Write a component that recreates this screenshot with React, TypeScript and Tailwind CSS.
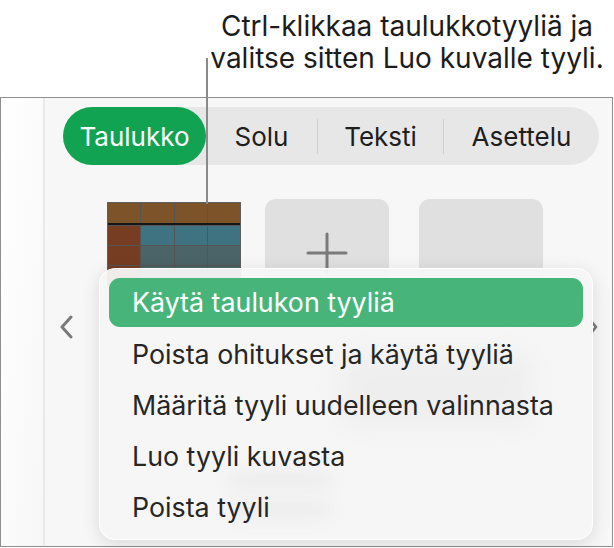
import React from 'react';

const font = { fontFamily: 'Inter, "Noto Sans", sans-serif' };

const menuItems = [
  'Käytä taulukon tyyliä',
  'Poista ohitukset ja käytä tyyliä',
  'Määritä tyyli uudelleen valinnasta',
  'Luo tyyli kuvasta',
  'Poista tyyli',
];

function TableStyleThumb() {
  // 4 columns, header row + body rows
  const body = ['bg-[#3f7381]', 'bg-[#4b6467]', 'bg-[#4b6467]'];
  return (
    <div className="w-[134px] border border-[#5e5e5e] bg-[#555]">
      <div className="grid grid-cols-4 gap-px">
        {[0, 1, 2, 3].map((c) => (
          <div key={c} className="h-[20px] bg-[#7d5429]" />
        ))}
      </div>
      <div className="h-[2px] bg-[#151515]" />
      {body.map((cls, r) => (
        <div key={r} className="grid grid-cols-4 gap-px mt-px first:mt-0">
          <div className="h-[19px] bg-[#773d22]" />
          <div className={`h-[19px] ${cls}`} />
          <div className={`h-[19px] ${cls}`} />
          <div className={`h-[19px] ${cls}`} />
        </div>
      ))}
    </div>
  );
}

export default function App() {
  return (
    <div className="relative w-[614px] h-[548px] bg-white overflow-hidden" style={font}>
      {/* callout */}
      <div className="h-[97px] pl-[202px] pr-[2px] pt-[10px] text-center text-[28px] leading-[32px] text-[#1c1c1c]">
        <div>Ctrl-klikkaa taulukkotyyliä ja</div>
        <div>valitse sitten Luo kuvalle tyyli.</div>
      </div>

      {/* inspector panel */}
      <div className="flex h-[450px] w-[613px] border border-[#8f8f8f]">
        <div className="w-[42px] bg-gradient-to-br from-white to-[#f7f7f7]" />
        <div className="relative flex-1 border-l-2 border-[#e9e9e9] bg-[#f7f7f7]">
          {/* tabs */}
          <div className="ml-[18px] mt-[9px] flex h-[58px] w-[536px] items-center rounded-full bg-[#e7e7e7] text-[26px] text-[#1e1e1e]">
            <div className="flex h-full w-[143px] items-center justify-center rounded-full bg-[#12a352] text-white">
              Taulukko
            </div>
            <div className="flex w-[111px] justify-center">Solu</div>
            <div className="h-[35px] w-px bg-[#d0d0d0]" />
            <div className="flex w-[125px] justify-center">Teksti</div>
            <div className="h-[35px] w-px bg-[#d0d0d0]" />
            <div className="flex w-[155px] justify-center">Asettelu</div>
          </div>

          {/* style carousel */}
          <div className="mt-[34px] flex items-start">
            <svg className="ml-[14px] mt-[116px]" width="16" height="24" viewBox="0 0 16 24">
              <path d="M12 2 L3 12 L12 22" fill="none" stroke="#7a7a7a" strokeWidth="3" strokeLinecap="round" strokeLinejoin="round" />
            </svg>
            <div className="ml-[32px] mt-[3px]">
              <TableStyleThumb />
            </div>
            <div className="ml-[24px] flex h-[100px] w-[124px] justify-center rounded-[11px] bg-[#e0e0e0]">
              <svg className="mt-[33px]" width="42" height="42" viewBox="0 0 42 42">
                <path d="M21 2 V40 M2 21 H40" stroke="#7a7a7a" strokeWidth="3" strokeLinecap="round" />
              </svg>
            </div>
            <div className="ml-[30px] h-[100px] w-[124px] rounded-[11px] bg-[#e0e0e0]" />
            <svg className="ml-[47px] mt-[121px]" width="8" height="14" viewBox="0 0 8 14">
              <path d="M1.5 1.5 L6 7 L1.5 12.5" fill="none" stroke="#7a7a7a" strokeWidth="2.6" strokeLinecap="round" strokeLinejoin="round" />
            </svg>
          </div>

          {/* context menu */}
          <div className="absolute left-[54px] top-[170px] h-[272px] w-[494px] overflow-hidden rounded-[16px] border border-white bg-[#f6f6f6]/95 px-[9px] pt-[9px] shadow-[0_4px_18px_rgba(0,0,0,0.12)]">
            <div className="absolute left-[240px] top-[85px] h-[70px] w-[190px] rounded-[12px] bg-[#eeeeee] blur-md" />
            <div className="absolute left-[130px] top-[205px] h-[12px] w-[100px] rounded bg-[#e9e9e9] blur-sm" />
            <div className="absolute left-[130px] top-[235px] h-[12px] w-[100px] rounded bg-[#e9e9e9] blur-sm" />
            <div className="relative flex flex-col text-[26.8px] text-[#262626]">
              {menuItems.map((label, i) => (
                <div
                  key={label}
                  className={
                    i === 0
                      ? 'flex h-[49px] mb-[2px] items-center rounded-[11px] bg-[#47b57a] pl-[23px] text-white'
                      : 'flex h-[51px] items-center pl-[23px]'
                  }
                >
                  {label}
                </div>
              ))}
            </div>
          </div>
        </div>
      </div>

      {/* callout leader */}
      <div className="absolute left-[206px] top-[58px] h-[146px] w-[2px] bg-[#8a8a8a]" />
    </div>
  );
}
